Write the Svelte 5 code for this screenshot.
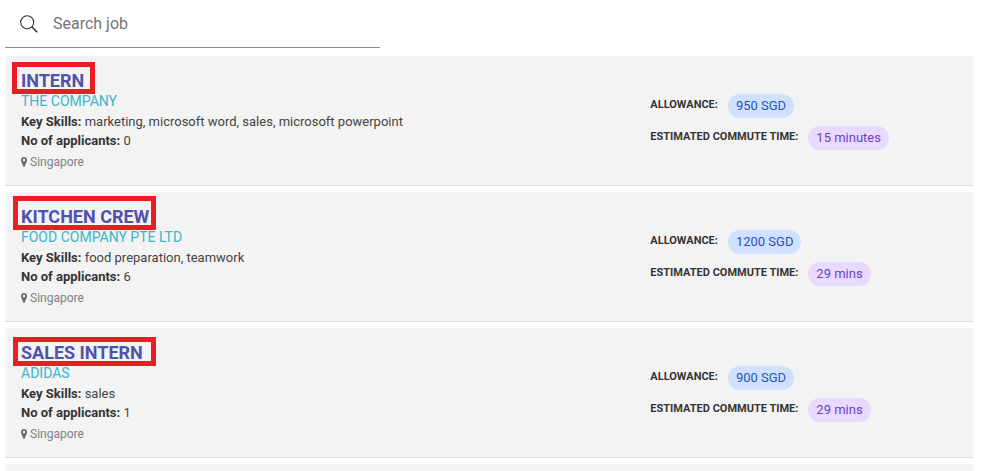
<script>
  const jobs = [
    { title: 'INTERN', company: 'THE COMPANY', skills: 'marketing, microsoft word, sales, microsoft powerpoint', applicants: 0, place: 'Singapore', allowance: '950 SGD', commute: '15 minutes', mark: { top: 6, left: 7, width: 83, height: 32 } },
    { title: 'KITCHEN CREW', company: 'FOOD COMPANY PTE LTD', skills: 'food preparation, teamwork', applicants: 6, place: 'Singapore', allowance: '1200 SGD', commute: '29 mins', mark: { top: 4, left: 8, width: 143, height: 34 } },
    { title: 'SALES INTERN', company: 'ADIDAS', skills: 'sales', applicants: 1, place: 'Singapore', allowance: '900 SGD', commute: '29 mins', mark: { top: 9, left: 8, width: 143, height: 29 } },
  ];
  let query = $state('');
</script>

<main>
  <label class="search">
    <svg width="18" height="18" viewBox="0 0 18 18" fill="none" stroke="#333" stroke-width="1.1" aria-hidden="true">
      <circle cx="7.2" cy="7.2" r="6.5" />
      <path d="M11.8 11.8 17.2 17.2" stroke-width="1.6" />
    </svg>
    <input type="text" placeholder="Search job" aria-label="Search job" bind:value={query} />
  </label>

  <div class="list">
    {#each jobs as job}
      <article class="card">
        <div class="info">
          <h2>{job.title}</h2>
          <p class="company">{job.company}</p>
          <p class="line"><b>Key Skills:</b> {job.skills}</p>
          <p class="line"><b>No of applicants:</b> {job.applicants}</p>
          <p class="place">
            <svg width="6" height="10" viewBox="0 0 6 10" aria-hidden="true">
              <path fill="#6c6c6c" fill-rule="evenodd" d="M3 0a3 3 0 0 0-3 3c0 .6.1 1 .3 1.4L2.300 9.400a.8.8 0 0 0 1.400 0L5.700 4.400C5.900 4 6 3.600 6 3a3 3 0 0 0-3-3Zm0 1.800a1.200 1.200 0 1 1 0 2.400 1.200 1.200 0 0 1 0-2.400Z" />
            </svg>
            {job.place}
          </p>
        </div>
        <div class="facts">
          <div class="fact"><b>ALLOWANCE:</b><span class="chip pay">{job.allowance}</span></div>
          <div class="fact"><b>ESTIMATED COMMUTE TIME:</b><span class="chip time">{job.commute}</span></div>
        </div>
        <span
          class="mark"
          style="top:{job.mark.top}px;left:{job.mark.left}px;width:{job.mark.width}px;height:{job.mark.height}px"
        ></span>
      </article>
    {/each}
    <article class="card"></article>
  </div>
</main>

<style>
  main {
    box-sizing: border-box;
    height: 100vh;
    overflow: hidden;
    padding: 0 12px 0 5px;
    background: #fff;
    color: #444;
    font-family: Roboto, "Liberation Sans", sans-serif;
    font-size: 13px;
  }
  .search {
    box-sizing: border-box;
    display: flex;
    align-items: center;
    gap: 15px;
    width: 375px;
    max-width: 100%;
    height: 48px;
    padding: 0 15px;
    border-bottom: 1px solid #8a8a8a;
  }
  .search svg {
    flex: none;
  }
  input {
    flex: 1;
    min-width: 0;
    padding: 0;
    border: 0;
    outline: 0;
    background: none;
    color: #333;
    font: 16px/24px Roboto, "Liberation Sans", sans-serif;
  }
  input::placeholder {
    color: #757575;
    opacity: 1;
  }
  .list {
    display: flex;
    flex-direction: column;
    gap: 6px;
    margin-top: 8px;
  }
  .card {
    position: relative;
    box-sizing: border-box;
    display: flex;
    min-height: 130px;
    border-bottom: 1px solid #dcdcdc;
    background: #f3f3f3;
  }
  .info {
    box-sizing: border-box;
    flex: 0 0 66.6667%;
    padding: 14px 16px 12px;
  }
  h2,
  p {
    margin: 0;
  }
  h2 {
    color: #5052ac;
    font-size: 18px;
    font-weight: 700;
    line-height: 22px;
  }
  .company {
    margin-bottom: 2px;
    color: #39b6cc;
    font-size: 14px;
    line-height: 18px;
  }
  .line {
    line-height: 19px;
  }
  b {
    color: #333;
    font-weight: 700;
  }
  .place {
    display: flex;
    align-items: center;
    gap: 3px;
    margin-top: 2px;
    color: #808080;
    font-size: 12px;
    line-height: 20px;
  }
  .facts {
    display: flex;
    flex-direction: column;
    gap: 8px;
    padding-top: 38px;
  }
  .fact {
    display: flex;
    gap: 10px;
    line-height: 24px;
  }
  .fact b {
    font-size: 11px;
    line-height: 22px;
    white-space: nowrap;
  }
  .chip {
    padding: 0 8px;
    border-radius: 12px;
    white-space: nowrap;
  }
  .pay {
    background: #d0e1ff;
    color: #2850c8;
  }
  .time {
    background: #e8d9ff;
    color: #6f3fc0;
  }
  .mark {
    position: absolute;
    box-sizing: border-box;
    border: 5px solid #ed1c24;
    pointer-events: none;
  }
</style>
